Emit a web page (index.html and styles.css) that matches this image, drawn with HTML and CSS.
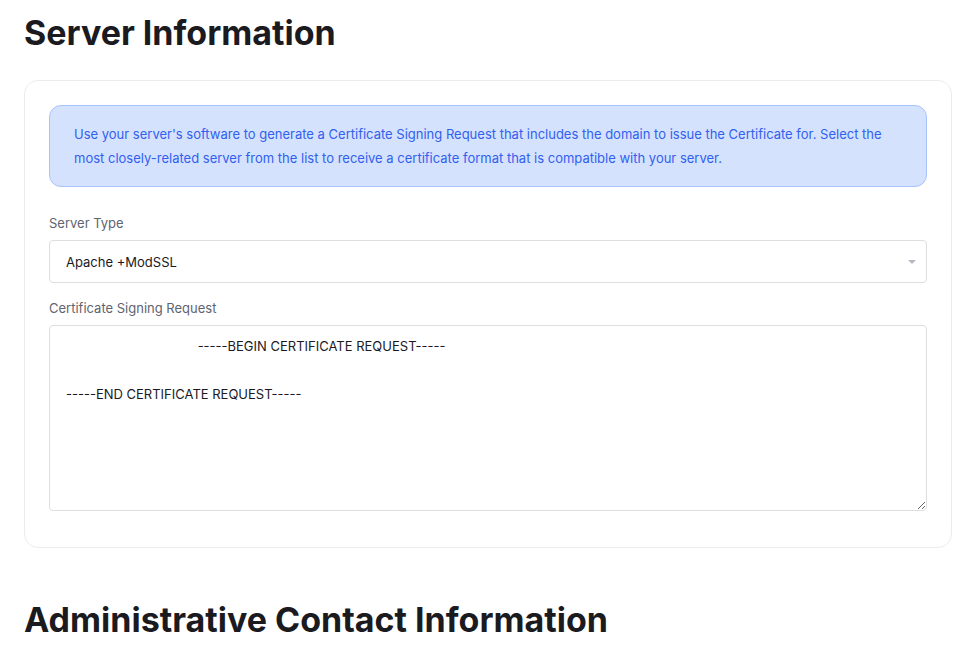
FILE: index.html
```html
<!DOCTYPE html>
<html lang="en">
<head>
<meta charset="utf-8">
<title>Server Information</title>
<link rel="stylesheet" href="styles.css">
</head>
<body>
<main class="page">
  <h2 class="section-title">Server Information</h2>
  <section class="card">
    <div class="alert">Use your server's software to generate a Certificate Signing Request that includes the domain to issue the Certificate for. Select the most closely-related server from the list to receive a certificate format that is compatible with your server.</div>
    <label class="field-label" for="servertype">Server Type</label>
    <div class="select-wrap">
      <select id="servertype" class="select">
        <option>Apache +ModSSL</option>
      </select>
      <span class="caret"></span>
    </div>
    <label class="field-label" for="csr">Certificate Signing Request</label>
    <textarea id="csr" class="textarea">                                    -----BEGIN CERTIFICATE REQUEST-----

-----END CERTIFICATE REQUEST-----</textarea>
  </section>
  <h2 class="section-title second">Administrative Contact Information</h2>
</main>
</body>
</html>
```
FILE: styles.css
```css
* { box-sizing: border-box; }
html, body { margin: 0; padding: 0; background: #fff; }
body {
  font-family: Inter, "Noto Sans", sans-serif;
  color: #1a1a1f;
}
.page {
  padding: 14px 15px 0 24px;
}
.section-title {
  margin: 0;
  font-size: 34px;
  line-height: 38px;
  font-weight: 700;
  letter-spacing: 0;
  color: #1a1a1f;
}
.section-title.second {
  margin-top: 53px;
}
.card {
  margin-top: 28px;
  border: 1px solid #ececec;
  border-radius: 14px;
  padding: 24px 24px 36px 24px;
  display: flex;
  flex-direction: column;
}
.alert {
  background: #d5e2fe;
  border: 1px solid #a8c3fb;
  border-radius: 12px;
  color: #3160ef;
  font-size: 13px;
  line-height: 24px;
  padding: 16px 24px 16px 24px;
}
.field-label {
  display: block;
  margin-top: 26px;
  font-size: 13px;
  line-height: 20px;
  color: #5f6470;
}
.select-wrap {
  position: relative;
  margin-top: 7px;
}
.select {
  width: 100%;
  height: 43px;
  appearance: none;
  -webkit-appearance: none;
  background: #fff;
  border: 1px solid #dedede;
  border-radius: 4px;
  font-family: Inter, "Noto Sans", sans-serif;
  font-size: 13px;
  color: #1a1a1f;
  padding: 0 16px;
  outline: none;
}
.caret {
  position: absolute;
  right: 11px;
  top: 20px;
  width: 0;
  height: 0;
  border-left: 4px solid transparent;
  border-right: 4px solid transparent;
  border-top: 4px solid #b4b8c2;
}
.select-wrap + .field-label {
  margin-top: 15px;
}
.textarea {
  margin-top: 7px;
  width: 100%;
  height: 186px;
  border: 1px solid #dedede;
  border-radius: 4px;
  font-family: Inter, "Noto Sans", sans-serif;
  font-size: 13px;
  line-height: 24px;
  color: #1a1a1f;
  padding: 8px 16px;
  resize: vertical;
  outline: none;
}
```
